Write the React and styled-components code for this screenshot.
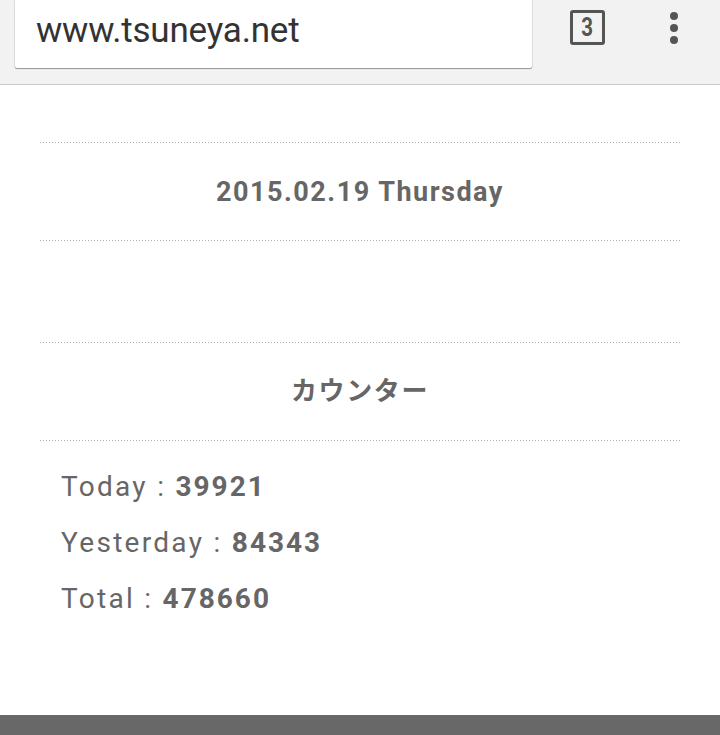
import React from "react";
import styled, { createGlobalStyle } from "styled-components";

const Global = createGlobalStyle`
  html, body { margin: 0; padding: 0; background: #fff; }
  body { font-family: Roboto, "Noto Sans CJK JP", sans-serif; width: 720px; height: 735px; overflow: hidden; }
`;

const Page = styled.div`
  width: 720px;
  height: 735px;
  display: flex;
  flex-direction: column;
  background: #fff;
`;

const Toolbar = styled.div`
  height: 85px;
  flex-shrink: 0;
  background: #f2f2f2;
  border-bottom: 1px solid #c8c8c8;
  display: flex;
  align-items: flex-start;
  box-sizing: border-box;
`;

const UrlBox = styled.div`
  margin-left: 15px;
  width: 517px;
  height: 68px;
  background: #fff;
  box-shadow: 0 1px 1px rgba(0, 0, 0, 0.35), 0 0 0 1px rgba(0, 0, 0, 0.06);
  border-radius: 0 0 2px 2px;
  display: flex;
  align-items: center;
  padding-left: 21px;
  padding-bottom: 8px;
  box-sizing: border-box;
  font-family: Roboto, sans-serif;
  font-size: 35px;
  letter-spacing: -0.2px;
  color: #333;
`;

const TabCount = styled.div`
  margin-left: 38px;
  margin-top: 10px;
  width: 35px;
  height: 35px;
  box-sizing: border-box;
  border: 3px solid #555;
  border-radius: 3px;
  display: flex;
  align-items: center;
  justify-content: center;
  font-family: Roboto, sans-serif;
  font-weight: 700;
  font-size: 25px;
  line-height: 1;
  color: #555;
`;

const Digit = styled.span`
  display: inline-block;
  transform: scaleX(0.82);
`;

const Menu = styled.div`
  margin-left: 65px;
  margin-top: 12px;
  display: flex;
  flex-direction: column;
  gap: 4px;
`;

const Dot = styled.span`
  width: 8px;
  height: 8px;
  border-radius: 50%;
  background: #555;
`;

const Content = styled.div`
  flex: 1;
  padding: 57px 40px 0;
`;

const Section = styled.section`
  margin-bottom: ${(p) => p.$mb || 0}px;
`;

const Heading = styled.h2`
  margin: 0;
  height: 99px;
  box-sizing: border-box;
  padding-bottom: ${(p) => p.$pb || 0}px;
  display: flex;
  align-items: center;
  justify-content: center;
  background-image:
    linear-gradient(to right, #b4b4b4 50%, transparent 50%),
    linear-gradient(to right, #b4b4b4 50%, transparent 50%);
  background-size: 3px 1px, 3px 1px;
  background-repeat: repeat-x, repeat-x;
  background-position: 0 0, 0 100%;
  font-family: Roboto, "Noto Sans CJK JP", sans-serif;
  font-weight: 700;
  font-size: ${(p) => p.$size || 24}px;
  letter-spacing: ${(p) => p.$ls || 1}px;
  color: #666;
`;

const CounterList = styled.ul`
  list-style: none;
  margin: 0;
  padding: 18px 0 0 21px;
`;

const CounterRow = styled.li`
  height: 56px;
  line-height: 56px;
  font-family: Roboto, sans-serif;
  font-size: 28px;
  letter-spacing: 2.3px;
  color: #666;
`;

const Num = styled.b`
  font-weight: 700;
  letter-spacing: 2px;
`;

const Footer = styled.div`
  height: 20px;
  flex-shrink: 0;
  background: #686868;
`;

const counters = [
  ["Today", "39921"],
  ["Yesterday", "84343"],
  ["Total", "478660"],
];

export default function App() {
  return (
    <Page>
      <Global />
      <Toolbar>
        <UrlBox>www.tsuneya.net</UrlBox>
        <TabCount>
          <Digit>3</Digit>
        </TabCount>
        <Menu>
          <Dot />
          <Dot />
          <Dot />
        </Menu>
      </Toolbar>
      <Content>
        <Section $mb={101}>
          <Heading $size={27} $ls={1.5}>2015.02.19 Thursday</Heading>
        </Section>
        <Section>
          <Heading $size={26} $ls={1.6} $pb={6}>
            カウンター
          </Heading>
          <CounterList>
            {counters.map(([label, n]) => (
              <CounterRow key={label}>
                {label} : <Num>{n}</Num>
              </CounterRow>
            ))}
          </CounterList>
        </Section>
      </Content>
      <Footer />
    </Page>
  );
}
